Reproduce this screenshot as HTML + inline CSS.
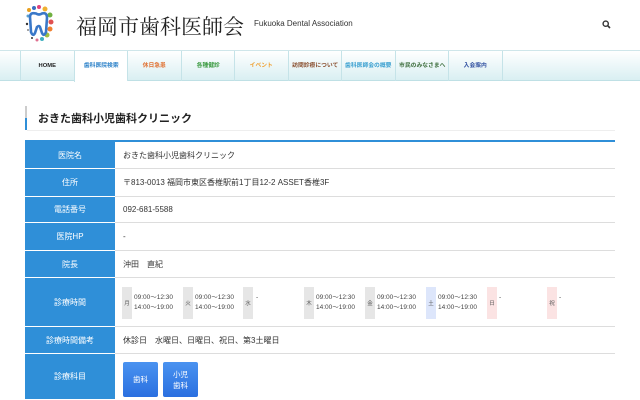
<!DOCTYPE html>
<html><head><meta charset="utf-8"><style>
*{margin:0;padding:0;box-sizing:border-box}
body{width:640px;height:400px;overflow:hidden;background:#fff;font-family:"Liberation Sans","Noto Sans CJK JP",sans-serif;color:#333;position:relative}
.abs{position:absolute}
.nav{position:absolute;left:0;top:50px;width:640px;height:31px;background:linear-gradient(#fff,#d9eff2);border-top:1px solid #cfe6ea;border-bottom:1px solid #bfe0e5}
.nav div{position:absolute;top:0;height:30px;width:53.5px;border-left:1px solid #c5e3e8;font-size:5.8px;font-weight:bold;text-align:center;line-height:30px;white-space:nowrap;overflow:hidden}
.lbl{position:absolute;left:25px;width:90px;background:#2f8fd8;color:#fff;font-size:8px;display:flex;align-items:center;justify-content:center;border-bottom:1px solid #fff}
.val{position:absolute;left:115px;width:500px;border-bottom:1px solid #ddd;font-size:8px;display:flex;align-items:center;padding-left:8px;color:#333}
.d{position:absolute;top:287px;width:10px;height:32px;background:#e6e6e6;font-size:5.5px;display:flex;align-items:center;justify-content:center;color:#555}
.t{position:absolute;top:293px;font-size:6.5px;line-height:10px;color:#444}
.btn{position:absolute;top:362px;width:35px;height:35px;background:linear-gradient(#4a93f0,#2a6fe0);color:#fff;font-size:7.5px;border-radius:2px;display:flex;align-items:center;justify-content:center;text-align:center;line-height:11px}
</style></head><body>
<svg class="abs" style="left:24px;top:4px" width="30" height="40" viewBox="0 0 30 40">
<circle cx="5" cy="6" r="2" fill="#e8a020"/><circle cx="10" cy="4" r="2" fill="#3a6fc0"/><circle cx="15" cy="3" r="2" fill="#e0407a"/><circle cx="21" cy="5" r="2.5" fill="#f0b030"/>
<circle cx="4" cy="12" r="1.5" fill="#5aa0d0"/><circle cx="26" cy="11" r="2.5" fill="#70b040"/><circle cx="27" cy="18" r="2.5" fill="#e05050"/><circle cx="26" cy="25" r="2.5" fill="#f08030"/><circle cx="23" cy="31" r="2.5" fill="#a0c040"/><circle cx="18" cy="35" r="2" fill="#40b0c0"/><circle cx="13" cy="36" r="1.5" fill="#e07090"/><circle cx="8" cy="34" r="1" fill="#333"/><circle cx="3" cy="20" r="1.2" fill="#333"/><circle cx="4" cy="26" r="1" fill="#888"/>
<path d="M6 13 Q6 8 12 9.5 Q15 11.5 18 9.5 Q23 8 23 14 L22 28 Q20 33 18 29 L16 23 Q15 21 13 23 L11 29 Q9 33 7 28 Z" fill="none" stroke="#3a78c8" stroke-width="2.6"/>
</svg>
<div class="abs" style="left:76px;top:11px;font-family:'Liberation Serif','Noto Serif CJK SC',serif;font-size:21px;color:#222">福岡市歯科医師会</div>
<div class="abs" style="left:254px;top:19px;font-size:8px;color:#333">Fukuoka Dental Association</div>
<svg class="abs" style="left:602px;top:20px" width="9" height="9" viewBox="0 0 9 9"><circle cx="3.7" cy="3.7" r="2.6" fill="none" stroke="#333" stroke-width="1.4"/><path d="M5.6 5.6L8 8" stroke="#333" stroke-width="1.6"/></svg>
<div class="nav">
<div style="left:20px;color:#222">HOME</div>
<div style="left:74px;color:#2a80c8;background:#fff;height:31px">歯科医院検索</div>
<div style="left:127px;color:#e07030">休日急患</div>
<div style="left:181px;color:#3a9a40">各種健診</div>
<div style="left:234px;color:#f0a030">イベント</div>
<div style="left:288px;color:#8a5030">訪問診療について</div>
<div style="left:341px;color:#3aa0d0">歯科医師会の概要</div>
<div style="left:395px;color:#407040">市民のみなさまへ</div>
<div style="left:448px;color:#3050a0">入会案内</div>
<div style="left:502px;width:1px"></div>
</div>
<div class="abs" style="left:25px;top:106px;width:2px;height:12px;background:#ccc"></div>
<div class="abs" style="left:25px;top:118px;width:2px;height:12px;background:#2f8fd8"></div>
<div class="abs" style="left:27px;top:130px;width:588px;height:1px;background:#eee"></div>
<div class="abs" style="left:38px;top:110px;font-size:11px;font-weight:bold;color:#222">おきた歯科小児歯科クリニック</div>
<div class="abs" style="left:25px;top:140px;width:590px;height:2px;background:#2f8fd8"></div>
<div class="lbl" style="top:142px;height:27px">医院名</div><div class="val" style="top:142px;height:27px">おきた歯科小児歯科クリニック</div>
<div class="lbl" style="top:169px;height:28px">住所</div><div class="val" style="top:169px;height:28px">〒813-0013 福岡市東区香椎駅前1丁目12-2 ASSET香椎3F</div>
<div class="lbl" style="top:197px;height:26px">電話番号</div><div class="val" style="top:197px;height:26px">092-681-5588</div>
<div class="lbl" style="top:223px;height:28px">医院HP</div><div class="val" style="top:223px;height:28px">-</div>
<div class="lbl" style="top:251px;height:27px">院長</div><div class="val" style="top:251px;height:27px">沖田　直紀</div>
<div class="lbl" style="top:278px;height:49px">診療時間</div><div class="val" style="top:278px;height:49px"></div>
<div class="d" style="left:122px">月</div><div class="t" style="left:134px">09:00～12:30<br>14:00～19:00</div>
<div class="d" style="left:183px">火</div><div class="t" style="left:195px">09:00～12:30<br>14:00～19:00</div>
<div class="d" style="left:243px">水</div><div class="t" style="left:256px">-</div>
<div class="d" style="left:304px">木</div><div class="t" style="left:316px">09:00～12:30<br>14:00～19:00</div>
<div class="d" style="left:365px">金</div><div class="t" style="left:377px">09:00～12:30<br>14:00～19:00</div>
<div class="d" style="left:426px;background:#dde6fb">土</div><div class="t" style="left:438px">09:00～12:30<br>14:00～19:00</div>
<div class="d" style="left:487px;background:#fbe3e3">日</div><div class="t" style="left:499px">-</div>
<div class="d" style="left:547px;background:#fbe3e3">祝</div><div class="t" style="left:559px">-</div>
<div class="lbl" style="top:327px;height:27px">診療時間備考</div><div class="val" style="top:327px;height:27px">休診日　水曜日、日曜日、祝日、第3土曜日</div>
<div class="lbl" style="top:354px;height:46px">診療科目</div>
<div class="btn" style="left:123px">歯科</div>
<div class="btn" style="left:163px">小児<br>歯科</div>
</body></html>
